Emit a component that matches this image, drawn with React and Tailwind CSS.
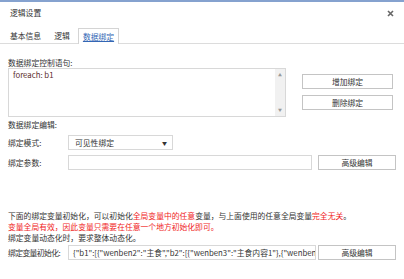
const font = { fontFamily: '"Noto Sans CJK SC", "Liberation Sans", sans-serif' }

function Btn({ children, className = '' }) {
    return (
        <div className={`h-[15px] border border-[#c4c4c4] bg-white flex items-center justify-center text-[7.8px] text-[#333] ${className}`}>
            {children}
        </div>
    )
}

export default function App() {
    return (
        <div className="w-[404px] h-[279px] bg-white border-t-2 border-[#85a2cf] text-[#333] overflow-hidden" style={font}>
            <div className="h-[22px] flex items-center justify-between pl-[10px] pr-[10px] text-[7.8px]">
                <span>逻辑设置</span>
                <svg width="7" height="7" viewBox="0 0 7 7">
                    <path d="M1 1L6 6M6 1L1 6" stroke="#666" strokeWidth="1.6" />
                </svg>
            </div>
            <div className="mt-[4px] h-[16px] border-b border-[#dcdcdc] flex items-end gap-[3px] pl-[5px] text-[7.8px]">
                <div className="w-[41px] h-[15px] flex items-center justify-center">基本信息</div>
                <div className="w-[26px] h-[15px] flex items-center justify-center">逻辑</div>
                <div className="w-[41px] h-[16px] -mb-px flex items-center justify-center border border-b-0 border-[#d4d4d4] bg-white text-[#3466b4] underline">数据绑定</div>
            </div>
            <div className="px-[8px] text-[7.8px]">
                <div className="mt-[13px] h-[11px] leading-[11px]">数据绑定控制语句:</div>
                <div className="flex items-start">
                    <div className="w-[278px] h-[49px] border border-[#d8d8d8] flex">
                        <div className="flex-1 pl-[4px] pt-[1px] text-[#5b2d2d] leading-[10px]">foreach: b1</div>
                        <div className="w-[10px] bg-[#f1f1f1] flex flex-col justify-between items-center text-[4px] text-[#999] py-[3px]">
                            <span>▲</span>
                            <span>▼</span>
                        </div>
                    </div>
                    <div className="ml-[16px] mt-[6px] flex flex-col gap-[6px]">
                        <Btn className="w-[91px]">增加绑定</Btn>
                        <Btn className="w-[91px]">删除绑定</Btn>
                    </div>
                </div>
                <div className="mt-[2px] h-[11px] leading-[11px]">数据绑定编辑:</div>
                <div className="mt-[5px] flex items-center h-[15px]">
                    <div className="w-[60px]">绑定模式:</div>
                    <div className="w-[105px] h-[15px] border border-[#d8d8d8] flex items-center justify-between pl-[6px] pr-[5px]">
                        <span>可见性绑定</span>
                        <span className="text-[5px]">▼</span>
                    </div>
                </div>
                <div className="mt-[5px] flex items-center h-[15px]">
                    <div className="w-[60px]">绑定参数:</div>
                    <div className="w-[244px] h-[15px] border border-[#d8d8d8]" />
                    <Btn className="ml-[6px] w-[78px]">高级编辑</Btn>
                </div>
                <div className="mt-[40px] leading-[11px]">
                    <div>
                        下面的绑定变量初始化，可以初始化<span className="text-[#f01c1c]">全局变量中的任意</span>变量，与上面使用的任意全局变量<span className="text-[#f01c1c]">完全无关</span>。
                    </div>
                    <div className="text-[#f01c1c]">变量全局有效，因此变量只需要在任意一个地方初始化即可。</div>
                    <div>绑定变量动态化时，要求整体动态化。</div>
                </div>
                <div className="mt-[2px] flex items-center h-[15px]">
                    <div className="w-[60px] shrink-0 whitespace-nowrap tracking-[-0.6px]">绑定变量初始化:</div>
                    <div className="w-[248px] shrink-0 h-[15px] border border-[#d8d8d8] flex items-center pl-[4px] overflow-hidden whitespace-nowrap">
                        {'{"b1":[{"wenben2":"主食","b2":[{"wenben3":"主食内容1"},{"wenben3":"'}
                    </div>
                    <Btn className="ml-[2px] w-[78px] shrink-0">高级编辑</Btn>
                </div>
            </div>
        </div>
    )
}
